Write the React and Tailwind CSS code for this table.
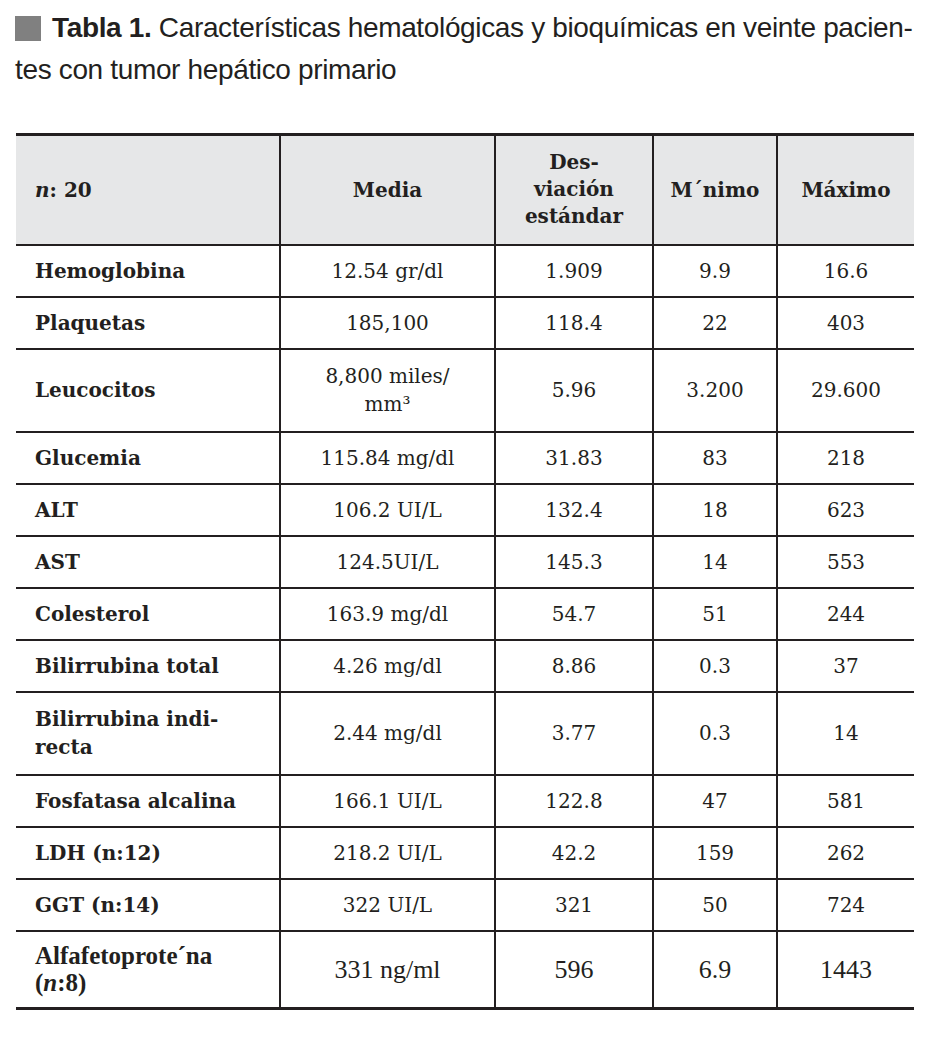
import React from "react";

const rows = [
  { label: "Hemoglobina", media: "12.54 gr/dl", de: "1.909", min: "9.9", max: "16.6" },
  { label: "Plaquetas", media: "185,100", de: "118.4", min: "22", max: "403" },
  { label: "Leucocitos", media: ["8,800 miles/", "mm³"], de: "5.96", min: "3.200", max: "29.600", tall: true },
  { label: "Glucemia", media: "115.84 mg/dl", de: "31.83", min: "83", max: "218" },
  { label: "ALT", media: "106.2 UI/L", de: "132.4", min: "18", max: "623" },
  { label: "AST", media: "124.5UI/L", de: "145.3", min: "14", max: "553" },
  { label: "Colesterol", media: "163.9 mg/dl", de: "54.7", min: "51", max: "244" },
  { label: "Bilirrubina total", media: "4.26 mg/dl", de: "8.86", min: "0.3", max: "37" },
  { label: ["Bilirrubina indi-", "recta"], media: "2.44 mg/dl", de: "3.77", min: "0.3", max: "14", tall: true },
  { label: "Fosfatasa alcalina", media: "166.1 UI/L", de: "122.8", min: "47", max: "581" },
  { label: "LDH (n:12)", media: "218.2 UI/L", de: "42.2", min: "159", max: "262" },
  { label: "GGT (n:14)", media: "322 UI/L", de: "321", min: "50", max: "724" },
];

function Lines({ value }) {
  if (Array.isArray(value)) {
    return value.map((v, i) => (
      <span key={i} className="block">
        {v}
      </span>
    ));
  }
  return value;
}

export default function App() {
  return (
    <div className="w-[945px] h-[1037px] bg-white text-[#231f20]">
      {/* titulo */}
      <div className="pl-[15px] pt-[7px] font-['Liberation_Sans_Narrow','Liberation_Sans',sans-serif] text-[28px] leading-[42px] tracking-[-0.35px] whitespace-nowrap">
        <div className="flex items-center">
          <span className="inline-block w-[26px] h-[25px] bg-[#808080] mr-[11px]" />
          <span>
            <b>Tabla 1.</b> Características hematológicas y bioquímicas en veinte pacien-
          </span>
        </div>
        <div>tes con tumor hepático primario</div>
      </div>

      <table className="mt-[42px] ml-[16px] w-[898px] table-fixed border-collapse font-['DejaVu_Serif',serif] text-[20px] leading-[28px]">
        <colgroup>
          <col className="w-[264px]" />
          <col className="w-[215px]" />
          <col className="w-[158px]" />
          <col className="w-[124px]" />
          <col className="w-[137px]" />
        </colgroup>
        <thead>
          <tr className="h-[110px] bg-[#e6e7e8] border-t-[3px] border-b-2 border-[#231f20] font-bold">
            <th className="text-left pl-[19px] font-bold">
              <i className="font-bold">n</i>: 20
            </th>
            <th className="border-l-2 border-[#231f20] text-center font-bold">Media</th>
            <th className="border-l-2 border-[#231f20] text-center font-bold leading-[27px]">
              Des-
              <br />
              viación
              <br />
              estándar
            </th>
            <th className="border-l-2 border-[#231f20] text-center font-bold">M´nimo</th>
            <th className="border-l-2 border-[#231f20] text-center font-bold">Máximo</th>
          </tr>
        </thead>
        <tbody>
          {rows.map((r, i) => (
            <tr
              key={i}
              className={`border-b-2 border-[#231f20] ${r.tall ? "h-[83px]" : "h-[52px]"}`}
            >
              <td className="pl-[19px] font-bold">
                <Lines value={r.label} />
              </td>
              <td className="border-l-2 border-[#231f20] text-center">
                <Lines value={r.media} />
              </td>
              <td className="border-l-2 border-[#231f20] text-center">{r.de}</td>
              <td className="border-l-2 border-[#231f20] text-center">{r.min}</td>
              <td className="border-l-2 border-[#231f20] text-center">{r.max}</td>
            </tr>
          ))}
          <tr className="h-[78px] border-b-[3px] border-[#231f20] font-['Liberation_Serif',serif] text-[26px] leading-[27px]">
            <td className="pl-[19px] font-bold text-[25px]">
              <span className="block">Alfafetoprote´na</span>
              <span className="block">
                (<i>n</i>:8)
              </span>
            </td>
            <td className="border-l-2 border-[#231f20] text-center">331 ng/ml</td>
            <td className="border-l-2 border-[#231f20] text-center">596</td>
            <td className="border-l-2 border-[#231f20] text-center">6.9</td>
            <td className="border-l-2 border-[#231f20] text-center">1443</td>
          </tr>
        </tbody>
      </table>
    </div>
  );
}
